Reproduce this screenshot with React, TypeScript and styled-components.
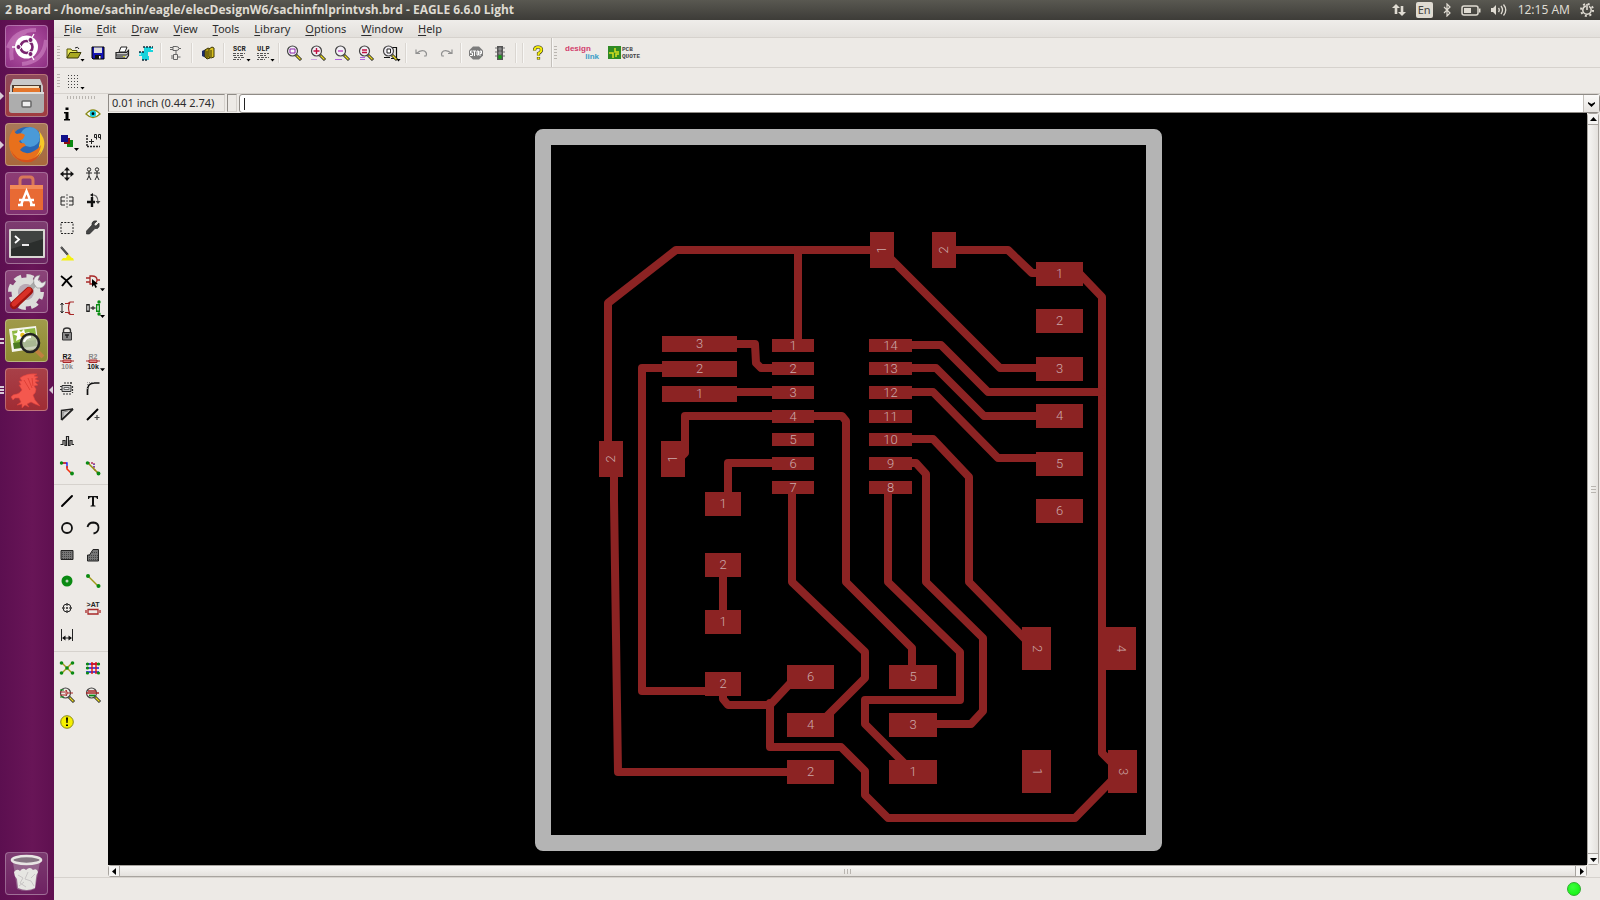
import React from "react";
import styled, { createGlobalStyle, css } from "styled-components";

const Global = createGlobalStyle`
  *, *::before, *::after { box-sizing: border-box; }
  html, body { margin: 0; padding: 0; background: #edeae6; }
  body { font-family: "Noto Sans", "Open Sans", sans-serif; font-size: 12px; color: #3a3a38; }
  button, input { font: inherit; color: inherit; }
  svg { display: block; }
`;

const Desktop = styled.div`
  display: flex;
  flex-direction: column;
  min-height: 100vh;
`;

const TopPanel = styled.header`
  display: flex;
  align-items: center;
  justify-content: space-between;
  height: 20px;
  padding: 0 6px 0 5px;
  color: #dfdbd2;
  background: linear-gradient(#595851, #3d3c38);
`;

const WindowTitle = styled.h1`
  margin: 0;
  font-family: "Open Sans", "Noto Sans", sans-serif;
  font-size: 12px;
  line-height: 20px;
  font-weight: 700;
  white-space: nowrap;
`;

const Indicators = styled.div`
  display: flex;
  align-items: center;
  gap: 10px;
`;

const Indicator = styled.button`
  display: flex;
  align-items: center;
  height: 18px;
  padding: 0;
  border: 0;
  background: none;
  line-height: 18px;
  white-space: nowrap;
`;

const KeyboardLayout = styled(Indicator)`
  height: 16px;
  padding: 0 2px;
  border-radius: 2px;
  background: #dfdbd2;
  color: #45443f;
  font-size: 11px;
  line-height: 16px;
`;

const Body = styled.div`
  display: flex;
  flex: 1;
`;

const Launcher = styled.nav`
  display: flex;
  flex-direction: column;
  gap: 6px;
  width: 54px;
  flex: none;
  padding: 5px 6px 5px 5px;
  background: linear-gradient(90deg, #5c0f50, #681557 60%, #5f1050);
`;

const Tile = styled.button<{ $bg: string; $last?: boolean }>`
  position: relative;
  width: 43px;
  height: 43px;
  padding: 0;
  border: 1px solid rgba(255, 255, 255, 0.28);
  border-radius: 4px;
  background: ${(p) => p.$bg};
  ${(p) => p.$last && css`margin-top: auto;`}
  svg { width: 41px; height: 41px; }
`;

const Pip = styled.span<{ $side: "left" | "right"; $kind?: "arrow" | "bars2" | "bars3" }>`
  position: absolute;
  top: 17px;
  ${(p) => (p.$side === "left" ? "left: -6px;" : "right: -6px;")}
  width: 4px;
  height: 8px;
  ${(p) =>
    p.$kind === "bars2"
      ? "background: linear-gradient(transparent 1px, #d8cbd6 1px 3px, transparent 3px 5px, #d8cbd6 5px 7px, transparent 7px);"
      : p.$kind === "bars3"
      ? "background: linear-gradient(#d8cbd6 0 2px, transparent 2px 3px, #d8cbd6 3px 5px, transparent 5px 6px, #d8cbd6 6px 8px);"
      : "background: #d8cbd6;"}
  ${(p) =>
    !p.$kind || p.$kind === "arrow"
      ? p.$side === "left"
        ? "clip-path: polygon(0 0, 100% 50%, 0 100%);"
        : "clip-path: polygon(100% 0, 0 50%, 100% 100%);"
      : ""}
`;

const AppWindow = styled.main`
  display: flex;
  flex-direction: column;
  flex: 1;
  min-width: 0;
  background: #edeae6;
`;

const MenuBar = styled.nav`
  display: flex;
  gap: 15px;
  height: 18px;
  padding: 0 10px;
  border-bottom: 1px solid #d6d2cd;
  background: linear-gradient(#efedea, #e3e0dc);
`;

const MenuItem = styled.button`
  padding: 0;
  border: 0;
  background: none;
  font-size: 11px;
  line-height: 18px;
  color: #2c2c2c;
  u { text-underline-offset: 2px; }
`;

const ToolBar = styled.div<{ $h: number }>`
  display: flex;
  align-items: center;
  height: ${(p) => p.$h}px;
  padding-left: 3px;
  border-bottom: 1px solid #d6d2cd;
`;

const Grip = styled.span<{ $row?: boolean }>`
  flex: none;
  ${(p) =>
    p.$row
      ? "width: 29px; height: 3px; margin: 2px auto 0; background: repeating-linear-gradient(90deg, #b9b5b0 0 1px, transparent 1px 3px);"
      : "width: 3px; height: 14px; margin-right: 2px; background: repeating-linear-gradient(#b9b5b0 0 1px, transparent 1px 3px);"}
`;

const ToolButton = styled.button`
  position: relative;
  display: flex;
  flex: none;
  align-items: center;
  justify-content: center;
  width: 24px;
  height: 24px;
  padding: 0;
  border: 0;
  background: none;
  svg { width: 16px; height: 16px; overflow: visible; }
`;

const Drop = styled.span`
  position: absolute;
  right: 1px;
  bottom: 3px;
  width: 5px;
  height: 3px;
  background: #000;
  clip-path: polygon(0 0, 100% 0, 50% 100%);
`;

const Divider = styled.span<{ $m: number; $tall?: boolean }>`
  flex: none;
  width: 2px;
  height: ${(p) => (p.$tall ? 29 : 20)}px;
  margin: 0 ${(p) => p.$m}px;
  border-left: 1px solid ${(p) => (p.$tall ? "#c4c0bb" : "#dad6d1")};
  border-right: 1px solid #f8f7f5;
`;

const DesignLink = styled.button`
  display: flex;
  flex-direction: column;
  width: 34px;
  margin: 0 9px 0 6px;
  padding: 0;
  border: 0;
  background: none;
  font-family: "Liberation Sans", Arial, sans-serif;
  font-size: 8px;
  line-height: 8px;
  font-weight: 700;
  text-align: left;
  color: #d23c6c;
  span + span { align-self: flex-end; color: #3a9cc8; }
`;

const PcbQuote = styled.button`
  display: flex;
  align-items: center;
  gap: 1px;
  padding: 0;
  border: 0;
  background: none;
  font-family: "Liberation Mono", monospace;
  font-size: 6px;
  line-height: 7px;
  font-weight: 700;
  text-align: left;
  color: #444;
  svg { width: 13px; height: 13px; }
`;

const Workspace = styled.div`
  display: flex;
  flex: 1;
`;

const Palette = styled.aside`
  display: flex;
  flex-direction: column;
  width: 54px;
  flex: none;
`;

const PaletteGroup = styled.div<{ $h: number }>`
  display: grid;
  grid-template-columns: 26px 26px;
  grid-auto-rows: 1fr;
  height: ${(p) => p.$h}px;
  margin-top: 1px;
  & + & { margin-top: 3px; padding-top: 3px; border-top: 1px solid #d6d2cd; }
`;

const PaletteButton = styled(ToolButton)<{ $col: number }>`
  grid-column: ${(p) => p.$col};
  width: 26px;
  height: auto;
`;

const Editor = styled.section`
  display: flex;
  flex-direction: column;
  flex: 1;
  min-width: 0;
`;

const CommandRow = styled.div`
  display: flex;
  height: 19px;
  gap: 2px;
`;

const Readout = styled.output<{ $w: number }>`
  width: ${(p) => p.$w}px;
  height: 18px;
  padding-left: 3px;
  border: 1px solid;
  border-color: #8f8b86 #d6d2cd #d6d2cd #8f8b86;
  font-size: 11px;
  line-height: 16px;
  color: #2c2c2c;
  white-space: nowrap;
  overflow: hidden;
`;

const CommandBox = styled.div`
  display: flex;
  align-items: center;
  flex: 1;
  height: 19px;
  border: 1px solid #8f8b86;
  border-radius: 3px;
  background: #fff;
`;

const Caret = styled.span`
  width: 1px;
  height: 12px;
  margin-left: 4px;
  background: #222;
`;

const CommandInput = styled.input`
  flex: 1;
  min-width: 0;
  height: 16px;
  padding: 0 2px;
  border: 0;
  outline: 0;
  background: transparent;
`;

const ComboButton = styled.button`
  display: flex;
  align-items: center;
  justify-content: center;
  width: 16px;
  height: 17px;
  padding: 0;
  border: 0;
  border-left: 1px solid #c4c0bb;
  background: linear-gradient(#fbfaf9, #e6e3df);
  svg { width: 7px; height: 6px; }
`;

const CanvasRow = styled.div`
  display: flex;
  flex: 1;
`;

const Canvas = styled.div`
  display: flex;
  flex: 1;
  align-items: center;
  justify-content: center;
  min-width: 0;
  background: #000;
  svg { font-family: Roboto, "Liberation Sans", sans-serif; font-size: 13px; font-weight: 300; }
`;

const ScrollBar = styled.div<{ $vertical?: boolean }>`
  display: flex;
  flex: none;
  flex-direction: ${(p) => (p.$vertical ? "column" : "row")};
  ${(p) => (p.$vertical ? "width: 12px; margin-right: 1px;" : "height: 12px; margin-right: 13px;")}
  border: 1px solid #a8a49f;
  border-radius: 3px;
  background: #e0ddd9;
`;

const ScrollButton = styled.button`
  display: flex;
  align-items: center;
  justify-content: center;
  width: 10px;
  height: 10px;
  flex: none;
  padding: 0;
  border: 0;
  background: #f6f5f3;
  svg { width: 7px; height: 7px; }
`;

const Thumb = styled.div<{ $vertical?: boolean }>`
  display: flex;
  align-items: center;
  justify-content: center;
  flex: 1;
  border: 0 solid #a8a49f;
  border-width: ${(p) => (p.$vertical ? "1px 0" : "0 1px")};
  background: linear-gradient(${(p) => (p.$vertical ? "90deg, " : "")}#f7f6f4, #e4e1dd);
  &::after {
    content: "";
    ${(p) =>
      p.$vertical
        ? "width: 5px; height: 7px; background: repeating-linear-gradient(#b9b5b0 0 1px, transparent 1px 3px);"
        : "width: 7px; height: 5px; background: repeating-linear-gradient(90deg, #b9b5b0 0 1px, transparent 1px 3px);"}
  }
`;

const StatusBar = styled.footer`
  display: flex;
  align-items: center;
  justify-content: flex-end;
  height: 23px;
  padding-right: 19px;
  border-top: 1px solid #d6d2cd;
`;

const StatusLamp = styled.span`
  width: 14px;
  height: 14px;
  border: 1px solid #2fae2f;
  border-radius: 50%;
  background: radial-gradient(circle at 40% 35%, #3dff3d, #0bf00b);
`;

/* ---------- icons ---------- */

const Lens = ({ children, small }: { children?: React.ReactNode; small?: boolean }) => (
  <>
    <path d="M10 10l5 5" stroke="#222" strokeWidth="3" />
    <path d="M10.500 10.500l4 4" stroke="#e8d820" strokeWidth="1.400" />
    <circle cx="6.500" cy="6" r="5" fill={small ? "none" : "#f3f0f6"} stroke="#444" strokeWidth="1.200" />
    {children}
  </>
);

const G = "#0a8a12";
const R = "#a82828";

const icons: Record<string, React.ReactNode> = {
  open: (
    <>
      <path d="M1 13V4h4l1 1.500h5V8" fill="#e8e85a" stroke="#55550a" />
      <path d="M1 13l3-5.500h11L12 13z" fill="#a8a820" stroke="#3a3a08" />
      <path d="M9 3q3-2 4 1" fill="none" stroke="#222" />
    </>
  ),
  save: (
    <>
      <path d="M2 2h12v12H3L2 13z" fill="#1414b4" stroke="#000" />
      <path d="M4 2.500h8V8H4z" fill="#dcdcdc" />
      <path d="M5 10h6v4H5z" fill="#111" />
      <path d="M9 11h1.500v2.500H9z" fill="#fff" />
    </>
  ),
  print: (
    <>
      <path d="M5 7l2-5h6l-2 5z" fill="#fff" stroke="#222" />
      <path d="M2 7.500h10.500l2-2v5l-2 3H2z" fill="#c8c8c8" stroke="#222" strokeWidth="1.200" />
      <path d="M2 10h10.500l2-2M3 12h8" fill="none" stroke="#222" />
      <path d="M9 11.500h2" stroke="#d8d820" />
    </>
  ),
  cam: (
    <>
      <path d="M6 2h9v5H6zM1 7h9v4H1zM4 11h7v4H4z" fill="#19d3dc" />
      <path d="M5 2h10M1 7h6M4 15h6" stroke="#102a3a" strokeWidth="1.300" strokeDasharray="2 1" />
      <path d="M13 4.500h2M1 9h2" stroke="#fff" />
    </>
  ),
  schematic: (
    <g fill="none" stroke="#666">
      <path d="M5 1.500h3q3 0 3 2t-3 2H5zM2 2.500h3M2 4.500h3M11 3.500h2" />
      <path d="M8 6v3M5.500 9.500h4v5h-4zM3 11h2.500M3 13h2.500M9.500 12h3" />
    </g>
  ),
  library: (
    <>
      <path d="M2 6l4-2v9l-4-2z" fill="#1a2a6a" />
      <path d="M5 5l3-2 2 1v9l-3 1-2-2z" fill="#b09a10" stroke="#3c3608" />
      <path d="M9 4l3-2 2 1v9l-3 1-2-1z" fill="#d8c020" stroke="#3c3608" />
      <path d="M7 6v7M11 5v7" stroke="#3c3608" />
    </>
  ),
  scr: (
    <>
      <text x="1" y="6" fontSize="7" fontWeight="700" fontFamily="Liberation Mono, monospace" fill="#222">SCR</text>
      <path d="M1 8.500h12M1 10.500h10M2 12.500h11M1 14.500h8" stroke="#555" strokeDasharray="3 1 2 1" />
    </>
  ),
  ulp: (
    <>
      <text x="1" y="6" fontSize="7" fontWeight="700" fontFamily="Liberation Mono, monospace" fill="#222">ULP</text>
      <path d="M1 8.500h12M1 10.500h10M2 12.500h11M1 14.500h8" stroke="#555" strokeDasharray="2 1 3 1" />
    </>
  ),
  zoomFit: <Lens><path d="M4 4h5v4H4z" fill="#fff" stroke="#8a20a8" /></Lens>,
  zoomIn: <Lens><path d="M6.500 3v6M3.500 6h6" stroke="#c01040" strokeWidth="1.400" /><path d="M1 14.500h6" stroke="#c8a0e0" /></Lens>,
  zoomOut: <Lens><path d="M4 6h5" stroke="#c040c0" strokeWidth="1.400" /><path d="M1 14.500h7" stroke="#b060e0" /></Lens>,
  zoomRedraw: <Lens><path d="M4 5h5M4 7.500h5" stroke="#c01040" strokeWidth="1.300" /><path d="M2 12.500h5M2 14.500h5" stroke="#b060e0" /></Lens>,
  zoomSelect: (
    <>
      <path d="M9 2.500h5.500v11H9M2 12.500h6" fill="none" stroke="#111" strokeWidth="1.200" />
      <Lens><path d="M5 4h3.500v4H5z" fill="#fff" stroke="#222" /></Lens>
    </>
  ),
  undo: <path d="M2 4.500v4h4M2.500 8.500q4-4 8-2.500 3 2 1.500 5h-2" fill="none" stroke="#909090" strokeWidth="1.200" />,
  redo: <path d="M14 4.500v4h-4M13.500 8.500q-4-4-8-2.500-3 2-1.500 5h2" fill="none" stroke="#909090" strokeWidth="1.200" />,
  stop: (
    <>
      <path d="M5 1.500h6l4 4v5l-4 4H5l-4-4v-5z" fill="#7c7c7c" />
      <path d="M4.500 6H2.500v2h2v2.500H2M5 6h3M6.500 6v5M9 6h1.500v4H9zM12 11V6h1.500v2.500H12" stroke="#fff" />
    </>
  ),
  go: (
    <>
      <path d="M5 1h6v14H5z" fill="#555" />
      <path d="M4 2v12M12 2v12" stroke="#777" strokeDasharray="2 2" />
      <circle cx="8" cy="4" r="1.700" fill="#8a8a8a" /><circle cx="8" cy="8" r="1.700" fill="#8a8a8a" /><circle cx="8" cy="12" r="1.900" fill="#18a018" />
    </>
  ),
  help: (
    <>
      <path d="M4.500 5.500q0-3.500 3.500-3.500t3.500 3q0 1.700-3 3.500v2M8.500 12v2.500" fill="none" stroke="#222" strokeWidth="3.200" />
      <path d="M4.500 5.500q0-3.500 3.500-3.500t3.500 3q0 1.700-3 3.500v2M8.500 12.300v2" fill="none" stroke="#f4ec08" strokeWidth="2.200" />
    </>
  ),
  grid: <path d="M2 2.500h12M2 5.500h12M2 8.500h12M2 11.500h12M2 14.500h12" stroke="#444" strokeDasharray="1 2" />,
  info: <path d="M6.500 1.500h3v2.500h-3zM5 6h4.500v7H11v1.500H5V13h1.500V7.500H5z" fill="#000" />,
  eye: (
    <>
      <path d="M1 8q7-8 14 0-7 7-14 0z" fill="#fff" stroke="#8a8a18" strokeWidth="1.300" />
      <circle cx="8" cy="7.700" r="3.200" fill="#18c8d8" /><circle cx="8" cy="7.700" r="1.400" fill="#000" />
    </>
  ),
  layers: <><path d="M8 7h6v7H8z" fill={G} /><path d="M5 5h6v6H5z" fill="#8a1010" /><path d="M2 2h7v7H2z" fill="#10108a" /></>,
  mark: (
    <>
      <path d="M2 2v12M2 13.500h13" stroke="#222" strokeWidth="1.500" strokeDasharray="2 1" />
      <path d="M6.500 6v5M4 8.500h5" stroke="#222" />
      <path d="M11.500 4.500h-2v-3h2v5M15.500 4.500h-2v-3h2v5" fill="none" stroke="#222" />
    </>
  ),
  move: (
    <>
      <path d="M8 3v10M3 8h10" stroke="#111" strokeWidth="1.300" />
      <path d="M8 1l3 3.500H5zM8 15l3-3.500H5zM1 8l3.500-3v6zM15 8l-3.500-3v6z" fill="#111" />
    </>
  ),
  copy: (
    <g fill="none" stroke="#222">
      <circle cx="4" cy="3.500" r="1.700" /><circle cx="12" cy="3.500" r="1.700" />
      <path d="M1 7h6M4 5v5l-2 4M4 10l2 4M9 7h6M12 5v5l-2 4M12 10l2 4" />
    </g>
  ),
  mirror: (
    <g fill="none" stroke="#222">
      <path d="M8 1v14" strokeDasharray="2 1" stroke="#666" />
      <path d="M6 4H2v8h4M2 8h4M10 4h4v8h-4M10 8h4" />
    </g>
  ),
  rotate: (
    <>
      <path d="M2 9h8M7 4v10" stroke="#111" strokeWidth="2.400" />
      <path d="M6 2q7-1 7 7" fill="none" stroke="#666" strokeWidth="1.200" /><path d="M10.500 8h5L13 11z" fill="#444" /><path d="M8 0v4L5 2z" fill="#111" />
    </>
  ),
  group: <path d="M2 2.500h12v11H2z" fill="none" stroke="#222" strokeDasharray="2 1.300" />,
  change: <path d="M14 3l-3 3-1.500-.5L9 4l3-3Q8 0 7 3v2L1.500 11v3h3L10 8.500h2.500Q15 7 14 3z" fill="#444" stroke="#222" strokeWidth=".6" />,
  paste: <><path d="M2 1l7 8" stroke="#333" strokeWidth="2" /><path d="M4 12h10l1 2.500H2zM9 8l4 4H7z" fill="#f4f010" /><path d="M2 1l7 8" stroke="#888" strokeWidth=".6" /></>,
  del: <path d="M2 3q6 4 11 11M13 3Q7 7 3 13" fill="none" stroke="#000" strokeWidth="1.900" />,
  add: (
    <>
      <path d="M5 3h2q5 0 5 4t-5 4H5zM1 5h4M1 9h4M12 7h3" fill="none" stroke={R} strokeWidth="1.300" />
      <path d="M7 6l6 5-2.500.5L12 14l-1.500 1-1.500-3-2 2z" fill="#000" />
    </>
  ),
  pinswap: (
    <>
      <path d="M3 3v10M1.500 5L3 3l1.500 2M1.500 11L3 13l1.500-2" fill="none" stroke="#222" />
      <path d="M6 3.500h3l2-1.500h4M6 12.500h3l2 2h4M11 2q-3 6 0 12" fill="none" stroke={R} strokeWidth="1.200" />
    </>
  ),
  replace: (
    <>
      <path d="M3 4v8" stroke="#222" strokeWidth="3.600" /><path d="M3 5.500v5" stroke="#eee" strokeWidth="1.400" />
      <path d="M13 4v8" stroke={G} strokeWidth="4" /><path d="M13 5.500v5" stroke="#eee" strokeWidth="1.400" />
      <circle cx="14" cy="2" r="1.700" fill={G} /><circle cx="14" cy="14" r="1.700" fill={G} />
      <path d="M5.500 8h5" stroke="#222" strokeWidth="1.300" /><path d="M8 6v4" stroke="#222" />
    </>
  ),
  lock: <><path d="M4.500 7V4.500Q4.500 2 8 2t3.500 2.500V7" fill="none" stroke="#333" strokeWidth="1.400" /><path d="M3.500 6.500h9v7.500h-9z" fill="#888" stroke="#333" /><path d="M8 9v3M6 9h4" stroke="#222" strokeWidth="1.400" /></>,
  name: (
    <g fontFamily="Liberation Sans, sans-serif" fontSize="7" fontWeight="700" textAnchor="middle">
      <text x="8" y="6" fill="#111">R2</text><text x="8" y="15.500" fill="#888">10k</text>
      <path d="M1 8h14" stroke={R} /><path d="M4 7h8v2.500H4z" fill="#e08a8a" stroke={R} />
    </g>
  ),
  value: (
    <g fontFamily="Liberation Sans, sans-serif" fontSize="7" fontWeight="700" textAnchor="middle">
      <text x="8" y="6" fill="#888">R2</text><text x="8" y="15.500" fill="#111">10k</text>
      <path d="M1 8h14" stroke={R} /><path d="M4 7h8v2.500H4z" fill="#e08a8a" stroke={R} />
    </g>
  ),
  smash: <><path d="M3 5.500h9v6H3z" fill="#ccc" stroke="#333" /><path d="M5 7.500h5v2H5z" fill="#eee" stroke="#666" /><path d="M5 3h9M12 2v3M4 14h9M1 6.500h2M1 9.500h2M13.500 6v7" stroke="#333" strokeDasharray="2 1" strokeWidth="1.200" /></>,
  miter: <><path d="M2.500 15V10q0-7 7-7h5" fill="none" stroke="#111" strokeWidth="1.700" /><path d="M2.500 9V2.500H9" fill="none" stroke="#888" strokeDasharray="1 1" /></>,
  split: <><path d="M2.500 14V4.500L14 3" fill="none" stroke="#222" strokeWidth="1.500" /><path d="M2.500 14L14 3" stroke="#222" strokeWidth="1.800" /><path d="M4 11V6l5-1" fill="#ccc" stroke="#888" /></>,
  optimize: <><path d="M2 14L13 3" stroke="#000" strokeWidth="2" /><path d="M12 9v5M9.500 11.500h5" stroke="#444" strokeWidth="1.200" /></>,
  meander: <path d="M1.500 11.500H4v-4h2v5h1.500v-9h2v9H11v-5h2v4h2" fill="none" stroke="#222" strokeWidth="1.200" />,
  route: <><path d="M3 3h5v5" fill="none" stroke="#1818f0" strokeWidth="1.300" /><path d="M3 3h4M8 6v3l4 4" fill="none" stroke="#f03010" strokeWidth="1.600" /><circle cx="2.500" cy="3" r="1.700" fill={G} /><circle cx="13" cy="13.500" r="1.900" fill={G} /></>,
  ripup: <><path d="M3 3h6v6l5 5" fill="none" stroke="#b03060" strokeWidth="1.400" strokeDasharray="2 1" /><path d="M3 3l11 11" stroke="#909010" strokeWidth="1.500" /><path d="M9 4v4" stroke="#3030e0" strokeDasharray="1 1" /><circle cx="2.500" cy="3" r="1.800" fill={G} /><circle cx="13.500" cy="13.500" r="1.900" fill={G} /></>,
  wire: <path d="M3 13L13 3" stroke="#000" strokeWidth="1.900" strokeLinecap="round" />,
  text: <path d="M3 3h10v3h-1q0-1.700-2-1.700H9v8l1.500.4v.8h-5v-.8L7 12.300v-8H6Q4 4.300 4 6H3z" fill="#111" />,
  circle: <circle cx="8" cy="8" r="5" fill="none" stroke="#111" strokeWidth="1.800" />,
  arc: <path d="M2.500 7q1-4.500 6-4.500 5 .5 5 5 0 5-5 6" fill="none" stroke="#111" strokeWidth="1.800" />,
  rect: <><path d="M2 3.500h12v9H2z" fill="#777" stroke="#222" /><path d="M3 5.500h11M3 7.500h11M3 9.500h11M3 11.500h11" stroke="#444" strokeDasharray="1 1" /></>,
  polygon: <><path d="M2.500 14V8h2L8 2.500h5.500V14z" fill="#777" stroke="#222" /><path d="M7 5.500h6M4 8.500h9M4 10.500h9M4 12.500h9" stroke="#444" strokeDasharray="1 1" /></>,
  via: <><circle cx="8" cy="8" r="5.500" fill={G} /><circle cx="8" cy="8" r="1.500" fill="#bcd8bc" /></>,
  signal: <><path d="M3 3l10 10" stroke="#a09a18" strokeWidth="1.400" /><circle cx="3" cy="3" r="2" fill={G} /><circle cx="13.500" cy="13" r="2" fill={G} /></>,
  hole: <><circle cx="8" cy="8" r="4" fill="none" stroke="#222" /><path d="M8 3v10M3 8h10" stroke="#222" strokeDasharray="3 1 2 1" /></>,
  attribute: (
    <>
      <text x="8" y="7" fontFamily="Liberation Sans, sans-serif" fontSize="7" fontWeight="700" textAnchor="middle" fill="#222">&gt;AT</text>
      <path d="M3 9.500h10v4.500H3zM1 10v3M15 10v3" fill="none" stroke={R} strokeWidth="1.300" />
    </>
  ),
  dimension: <><path d="M2.500 2v12M13.500 2v12M4 11h8" stroke="#222" /><path d="M3 11l3.500-2.500v5zM13 11L9.500 8.500v5z" fill="#111" /></>,
  ratsnest: <><path d="M3 3l10 10M13 3L3 13" stroke="#a09a18" strokeWidth="1.400" /><g fill={G}><circle cx="2.500" cy="3" r="1.800" /><circle cx="13.500" cy="3" r="1.800" /><circle cx="2.500" cy="13" r="1.800" /><circle cx="13.500" cy="13" r="1.800" /><circle cx="8" cy="8" r="1.800" /></g></>,
  auto: <><path d="M1 4h13M1 8h13M1 12h13" stroke="#1818e0" strokeWidth="1.400" /><path d="M7 2v12M11 2v12M6 4h9" stroke="#e01010" strokeWidth="1.400" /><g fill={G}><circle cx="2.500" cy="4" r="1.600" /><circle cx="2.500" cy="8" r="1.600" /><circle cx="2.500" cy="13" r="1.600" /><circle cx="13.500" cy="4" r="1.600" /><circle cx="13.500" cy="13" r="1.600" /></g></>,
  erc: <Lens small><path d="M1 5h5M1 8h5M7 3v6M7 3q3 3 0 6M9 6h5" stroke={R} fill="none" /><path d="M1 3h4M1 10h4" stroke={G} /></Lens>,
  drc: <Lens small><path d="M3 4h8M1 6h13" stroke={R} strokeWidth="1.500" /><path d="M4 8.500h6" stroke={G} strokeWidth="1.800" /></Lens>,
  errors: <><circle cx="8" cy="8" r="6.300" fill="#f6f000" stroke="#8a8a18" /><path d="M7 3.500h2L8.600 9H7.400zM7 10.500h2V12H7z" fill="#000" /></>,
};

const Icon = ({ name }: { name: string }) => (
  <svg viewBox="0 0 16 16" fill="none" aria-hidden="true">{icons[name]}</svg>
);

/* ---------- launcher ---------- */

const launcherArt: Record<string, React.ReactNode> = {
  dash: (
    <>
      <path d="M2 22Q8 4 30 4M40 14Q38 36 16 38M6 34Q2 14 20 6" fill="none" stroke="#e6a8dc" strokeOpacity=".4" strokeWidth="4" />
      <circle cx="20.500" cy="21" r="11.500" fill="#fff" />
      <circle cx="20.500" cy="21" r="6" fill="none" stroke="#7a2470" strokeWidth="2.600" />
      <path d="M20.500 21L28 8M20.500 21L28 34M20.500 21H6" stroke="#fff" strokeWidth="1.300" />
      <g fill="#7a2470" stroke="#fff" strokeWidth="1"><circle cx="12.500" cy="21" r="2.500" /><circle cx="24.500" cy="14" r="2.500" /><circle cx="24.500" cy="28" r="2.500" /></g>
    </>
  ),
  files: (
    <>
      <path d="M7 4h27l3 7v7H4v-7z" fill="#c9c9c9" />
      <path d="M6 10h29v8H6z" fill="#4a3a30" /><path d="M8 11h25v3H8z" fill="#f5e0c0" /><path d="M7 13h27v5H7z" fill="#e4762c" />
      <path d="M3 17h35v18q0 3-3 3H6q-3 0-3-3z" fill="#adadad" /><path d="M3 17h35v2H3z" fill="#ddd" />
      <rect x="16" y="26" width="9" height="6" rx="1" fill="#eee" stroke="#666" strokeWidth="1.500" />
    </>
  ),
  firefox: (
    <>
      <circle cx="21" cy="20" r="17" fill="#2a66b4" /><circle cx="24" cy="13" r="10" fill="#4a9ad8" />
      <path d="M33 7q9 11 3 21-6 10-16 9 13-3 13-15 2-8 0-15z" fill="#f8c828" />
      <path d="M3 19q0-10 5-14 0 4 3 5 5-2 8 1l-2 4-4 2q1 3 5 2l2 3q-3 0-6 4 6 6 14 1 4-2 7-6-1 9-8 14-12 6-20-3-4-6-4-13z" fill="#e8701c" />
      <path d="M5 26q5 11 17 10 8-1 13-9-4 13-17 11Q8 36 5 26z" fill="#d4501c" />
    </>
  ),
  software: (
    <>
      <path d="M14 12V7q0-3 3-3h7q3 0 3 3v5" fill="none" stroke="#d8785a" strokeWidth="3" />
      <path d="M4 12h33v25H4z" fill="#e86a34" /><path d="M4 12h33v4H4z" fill="#f28a58" />
      <path d="M15 32l5.500-14L26 32M13 27h15M12 32h5M24 32h5" fill="none" stroke="#fff" strokeWidth="2.400" />
    </>
  ),
  terminal: (
    <>
      <rect x="3" y="7" width="36" height="29" rx="1" fill="#d8d6d2" /><rect x="5" y="9" width="32" height="25" fill="#2b2e2c" />
      <path d="M5 9h32v8L5 27z" fill="#fff" fillOpacity=".1" />
      <path d="M9 14l4 3.500L9 21" fill="none" stroke="#fff" strokeWidth="1.800" /><path d="M16 23h7" stroke="#fff" strokeWidth="1.800" />
    </>
  ),
  settings: (
    <>
      <circle cx="20" cy="21" r="15.500" fill="none" stroke="#dcdcda" strokeWidth="5" strokeDasharray="7 5.170" />
      <circle cx="20" cy="21" r="11" fill="none" stroke="#dcdcda" strokeWidth="7" />
      <circle cx="20" cy="21" r="8" fill="#b8a8b4" />
      <path d="M24 18l8-8" stroke="#aaa" strokeWidth="5" /><path d="M28 13q-2-8 6-9l-2 5 4 3 4-2q-1 8-9 7z" fill="#e8e8e8" stroke="#888" strokeWidth=".6" />
      <path d="M8 34l15-14" stroke="#a01410" strokeWidth="8" strokeLinecap="round" /><path d="M8 33l15-14" stroke="#d83028" strokeWidth="5" strokeLinecap="round" />
    </>
  ),
  viewer: (
    <>
      <path d="M3 9l27-3 3 22-27 4z" fill="#f4f4ec" /><path d="M6 11l23-3 2 13-23 3z" fill="#8cb840" /><path d="M7 23l23-3 1 6-23 3z" fill="#4a7a20" />
      <path d="M12 9l3 3 3-3 1 4 5-1-3 4 3 4-5-1-2 3-3-3-4 2 1-5-4-2 4-1z" fill="#fff" /><circle cx="16.500" cy="15" r="2.300" fill="#e8c020" />
      <path d="M30 30l7 7" stroke="#c08040" strokeWidth="4" /><circle cx="24" cy="23" r="9" fill="#c0c8b0" fillOpacity=".8" stroke="#222" strokeWidth="2.600" />
      <path d="M18 22q2-5 7-5" fill="none" stroke="#fff" strokeWidth="2" />
    </>
  ),
  eagle: (
    <>
      <path
        d="M17 7Q23 4 31 5L28 7 32 8 29 10 33 12 29 13 32 16 28 17 30 20Q30 24 27 26L29 31 34 37 29 35 25 33 21 35 23 38 19 36 16 39 16 35 11 36 15 33 13 29 9 29 7 31 5 28Q7 25 11 25 14 24 16 21L13 16 15 16 13 12 16 12 14 9z"
        fill="#f4584e" stroke="#e0403a" strokeWidth=".6"
      />
      <path d="M18 11l6 10M22 9l4 10M26 9l1 8" stroke="#d83830" strokeWidth=".8" />
    </>
  ),
  trash: (
    <>
      <path d="M7 9l4 27q9 4 18 0l5-27z" fill="#a88aa4" fillOpacity=".6" />
      <path d="M8 19q3-4 6-1 3-4 6-1 4-4 7 0 4-2 5 2-2 3-2 6l-1 10q-8 4-17 0l-1-9q-3-3-3-7z" fill="#e6e6e2" />
      <path d="M12 22l5 3-3 5 6 4M22 19l-3 7 6 2 3 5M29 21l-4 4M13 33l5-4" fill="none" stroke="#c8c5c5" strokeWidth="1" />
      <ellipse cx="20.500" cy="7" rx="14.500" ry="4" fill="#857582" stroke="#e8e6e4" strokeWidth="2.600" />
    </>
  ),
};

type LaunchSpec = { id: string; label: string; bg: string; left?: "arrow" | "bars2" | "bars3"; right?: boolean };
const launchers: LaunchSpec[] = [
  { id: "dash", label: "Search your computer", bg: "radial-gradient(#b85aaa, #8e3083)" },
  { id: "files", label: "Files", bg: "linear-gradient(#8e4a5a, #a03c40)", left: "arrow" },
  { id: "firefox", label: "Firefox", bg: "linear-gradient(#a87858, #a8683c)", left: "arrow" },
  { id: "software", label: "Ubuntu Software", bg: "linear-gradient(#8c3c74, #803070)" },
  { id: "terminal", label: "Terminal", bg: "linear-gradient(#7e3c70, #6a2460)" },
  { id: "settings", label: "System Settings", bg: "linear-gradient(#8a4478, #7c2e6c)" },
  { id: "viewer", label: "Image Viewer", bg: "linear-gradient(#a09a4a, #8e8a30)", left: "bars2" },
  { id: "eagle", label: "EAGLE", bg: "linear-gradient(#a84048, #a02c34)", left: "bars3", right: true },
];

/* ---------- board ---------- */

const traces = [
  "882,250 676,250 608,303 608,450",
  "614,470 614,500 618,772 800,772",
  "798,250 798,345",
  "882,250 1000,368 1060,368",
  "944,250 1008,250 1032,273 1060,273",
  "1079,273 1102,297 1102,753 1118,769",
  "891,345 941,345 988,392 1102,392",
  "891,368 936,368 984,416 1060,416",
  "891,392 933,392 998,458 1060,458",
  "891,439 933,439 969,477 969,582 1026,640",
  "891,463 916,463 926,474 926,582 983,638 983,711 971,724 913,724",
  "888,487 888,582 960,652 960,700 865,700 865,724 913,772",
  "792,487 792,582 865,652 865,678 811,732",
  "792,416 842,416 846,421 846,582 912,648 912,677",
  "792,416 685,416 685,453 676,462",
  "792,463 728,463 728,504",
  "700,344 755,344 756,363 761,368 792,368",
  "700,368 642,368 642,691 722,691",
  "723,684 723,699 728,705 770,705 798,675",
  "770,703 770,747 841,747 865,771 865,795 888,818 1075,818 1121,771",
  "723,570 723,620",
  "700,392 792,392",
];

type Pad = [number, number, number, number, string, number?];
const column = (x: number, w: number, h: number, ys: number[], names: string[]): Pad[] =>
  ys.map((y, i) => [x, y, w, h, names[i]]);

const icRows = [339, 362, 386, 410, 433, 457, 481];
const pads: Pad[] = [
  [870, 232, 24, 36, "1", -90],
  [932, 232, 24, 36, "2", -90],
  [599, 441, 24, 36, "2", -90],
  [661, 441, 24, 36, "1", -90],
  ...column(1036, 47, 24, [262, 309, 357, 404, 452, 499], ["1", "2", "3", "4", "5", "6"]),
  ...column(662, 75, 16, [336, 361, 386], ["3", "2", "1"]),
  ...column(772, 42, 13, icRows, ["1", "2", "3", "4", "5", "6", "7"]),
  ...column(869, 43, 13, icRows, ["14", "13", "12", "11", "10", "9", "8"]),
  ...column(705, 36, 24, [492, 553, 610, 672], ["1", "2", "1", "2"]),
  ...column(787, 47, 24, [665, 713, 760], ["6", "4", "2"]),
  ...column(889, 48, 24, [665, 713, 760], ["5", "3", "1"]),
  [1022, 627, 29, 43, "2", 90],
  [1022, 750, 29, 43, "1", 90],
  [1106, 627, 30, 43, "4", 90],
  [1108, 750, 29, 43, "3", 90],
];

const Board = () => (
  <svg width="640" height="740" viewBox="528 119 640 740" role="img" aria-label="Printed circuit board layout">
    <rect x="543" y="137" width="611" height="706" fill="none" stroke="#b4b4b4" strokeWidth="16" strokeLinejoin="round" />
    <g fill="none" stroke="#8c2323" strokeWidth="8" strokeLinecap="round" strokeLinejoin="round">
      {traces.map((t) => <polyline key={t} points={t} />)}
    </g>
    {pads.map(([x, y, w, h, name, turn]) => (
      <g key={`${x}-${y}`} transform={`translate(${x + w / 2} ${y + h / 2})`}>
        <rect x={-w / 2} y={-h / 2} width={w} height={h} fill="#8c2323" />
        <text textAnchor="middle" y="4" fill="#cdaaaa" transform={turn ? `rotate(${turn})` : undefined}>{name}</text>
      </g>
    ))}
  </svg>
);

/* ---------- tool lists ---------- */

const ToolList = ({ items }: { items: string[] }) => (
  <>
    {items.map((it) => {
      const [name, drop] = it.split("+");
      return (
        <ToolButton key={name} aria-label={name}>
          <Icon name={name} />
          {drop !== undefined && <Drop />}
        </ToolButton>
      );
    })}
  </>
);

const paletteGroups: { h: number; rows: string[][] }[] = [
  { h: 54, rows: [["info", "eye"], ["layers+", "mark"]] },
  {
    h: 324,
    rows: [
      ["move", "copy"], ["mirror", "rotate"], ["group", "change"], ["paste"], ["del", "add+"], ["pinswap", "replace+"],
      ["lock"], ["name", "value+"], ["smash", "miter"], ["split", "optimize"], ["meander"], ["route", "ripup"],
    ],
  },
  { h: 164, rows: [["wire", "text"], ["circle", "arc"], ["rect", "polygon"], ["via", "signal"], ["hole", "attribute"], ["dimension"]] },
  { h: 84, rows: [["ratsnest", "auto"], ["erc", "drc"], ["errors"]] },
];

const menus = ["File", "Edit", "Draw", "View", "Tools", "Library", "Options", "Window", "Help"];

export default function App() {
  return (
    <Desktop>
      <Global />
      <TopPanel>
        <WindowTitle>2 Board - /home/sachin/eagle/elecDesignW6/sachinfnlprintvsh.brd - EAGLE 6.6.0 Light</WindowTitle>
        <Indicators>
          <Indicator aria-label="Network">
            <svg width="14" height="14" viewBox="0 0 14 14" fill="#dfdbd2"><path d="M4 1l4 4H5.300v6H2.700V5H0zM10 13l4-4h-2.700V3H8.700v6H6z" /></svg>
          </Indicator>
          <KeyboardLayout>En</KeyboardLayout>
          <Indicator aria-label="Bluetooth">
            <svg width="8" height="14" viewBox="0 0 8 14" fill="none" stroke="#dfdbd2" strokeWidth="1.200"><path d="M1 4l6 6-3 3V1l3 3-6 6" /></svg>
          </Indicator>
          <Indicator aria-label="Battery">
            <svg width="20" height="11" viewBox="0 0 20 11"><rect x="1" y="1" width="16" height="9" rx="2" fill="none" stroke="#dfdbd2" strokeWidth="1.500" /><path d="M3 3h7v5H3zM18 3.500h1.500v4H18z" fill="#dfdbd2" /></svg>
          </Indicator>
          <Indicator aria-label="Sound">
            <svg width="17" height="14" viewBox="0 0 17 14" fill="none" stroke="#dfdbd2" strokeWidth="1.300"><path d="M0 5h2l3-3v10L2 9H0z" fill="#dfdbd2" stroke="none" /><path d="M7.500 5q1.500 2 0 4M10 3q3 4 0 8M12.500 1.500q4.500 5.500 0 11" /></svg>
          </Indicator>
          <Indicator>12:15 AM</Indicator>
          <Indicator aria-label="Session">
            <svg width="14" height="14" viewBox="0 0 14 14" fill="none" stroke="#dfdbd2"><circle cx="7" cy="7" r="4.200" strokeWidth="1.500" strokeDasharray="23 3.400" strokeDashoffset="-21.500" /><circle cx="7" cy="7" r="6" strokeWidth="2" strokeDasharray="2 2.710" /><path d="M7 1v6" strokeWidth="1.600" /></svg>
          </Indicator>
        </Indicators>
      </TopPanel>

      <Body>
        <Launcher aria-label="Launcher">
          {launchers.map((l) => (
            <Tile key={l.id} $bg={l.bg} aria-label={l.label}>
              <svg viewBox="0 0 41 41">{launcherArt[l.id]}</svg>
              {l.left && <Pip $side="left" $kind={l.left} />}
              {l.right && <Pip $side="right" />}
            </Tile>
          ))}
          <Tile $bg="linear-gradient(#7c3a70, #6e2262)" $last aria-label="Trash">
            <svg viewBox="0 0 41 41">{launcherArt.trash}</svg>
          </Tile>
        </Launcher>

        <AppWindow>
          <MenuBar>
            {menus.map((m) => (
              <MenuItem key={m}><u>{m[0]}</u>{m.slice(1)}</MenuItem>
            ))}
          </MenuBar>

          <ToolBar $h={30}>
            <Grip />
            <ToolList items={["open+", "save", "print", "cam"]} />
            <Divider $m={2} />
            <ToolList items={["schematic"]} />
            <Divider $m={3} />
            <ToolList items={["library"]} />
            <Divider $m={3} />
            <ToolList items={["scr+", "ulp+"]} />
            <Divider $m={2} />
            <ToolList items={["zoomFit", "zoomIn", "zoomOut", "zoomRedraw", "zoomSelect+"]} />
            <Divider $m={3} />
            <ToolList items={["undo", "redo"]} />
            <Divider $m={2} />
            <ToolList items={["stop", "go"]} />
            <Divider $m={3} />
            <Divider $m={2} />
            <ToolList items={["help"]} />
            <Divider $m={1} $tall />
            <Grip />
            <DesignLink><span>design</span><span>link</span></DesignLink>
            <PcbQuote>
              <svg viewBox="0 0 13 13"><path d="M0 0h13v13H0z" fill="#2f8a24" /><path d="M1 7h4v5M7 2v4h4M8 11V8h3" fill="none" stroke="#d8e020" strokeWidth="1.500" /></svg>
              <span>PCB<br />QUOTE</span>
            </PcbQuote>
          </ToolBar>

          <ToolBar $h={26}>
            <Grip />
            <ToolList items={["grid+"]} />
          </ToolBar>

          <Workspace>
            <Palette>
              <Grip $row />
              {paletteGroups.map((g) => (
                <PaletteGroup key={g.h} $h={g.h}>
                  {g.rows.flatMap((row) =>
                    row.map((it, i) => {
                      const [name, drop] = it.split("+");
                      return (
                        <PaletteButton key={name} $col={i + 1} aria-label={name}>
                          <Icon name={name} />
                          {drop !== undefined && <Drop />}
                        </PaletteButton>
                      );
                    })
                  )}
                </PaletteGroup>
              ))}
            </Palette>

            <Editor>
              <CommandRow>
                <Readout $w={117}>0.01 inch (0.44 2.74)</Readout>
                <Readout $w={10} />
                <CommandBox>
                  <Caret />
                  <CommandInput aria-label="Command line" />
                  <ComboButton aria-label="Command history">
                    <svg viewBox="0 0 7 6"><path d="M0 1l3.500 2L7 1v1.500L3.500 6 0 2.500z" fill="#000" /></svg>
                  </ComboButton>
                </CommandBox>
              </CommandRow>
              <CanvasRow>
                <Canvas><Board /></Canvas>
                <ScrollBar $vertical>
                  <ScrollButton aria-label="Scroll up"><svg viewBox="0 0 7 7"><path d="M0 5h7L3.500 1z" /></svg></ScrollButton>
                  <Thumb $vertical />
                  <ScrollButton aria-label="Scroll down"><svg viewBox="0 0 7 7"><path d="M0 2h7L3.500 6z" /></svg></ScrollButton>
                </ScrollBar>
              </CanvasRow>
              <ScrollBar>
                <ScrollButton aria-label="Scroll left"><svg viewBox="0 0 7 7"><path d="M5 0v7L1 3.500z" /></svg></ScrollButton>
                <Thumb />
                <ScrollButton aria-label="Scroll right"><svg viewBox="0 0 7 7"><path d="M2 0v7l4-3.500z" /></svg></ScrollButton>
              </ScrollBar>
            </Editor>
          </Workspace>
          <StatusBar><StatusLamp role="status" aria-label="Ready" /></StatusBar>
        </AppWindow>
      </Body>
    </Desktop>
  );
}
